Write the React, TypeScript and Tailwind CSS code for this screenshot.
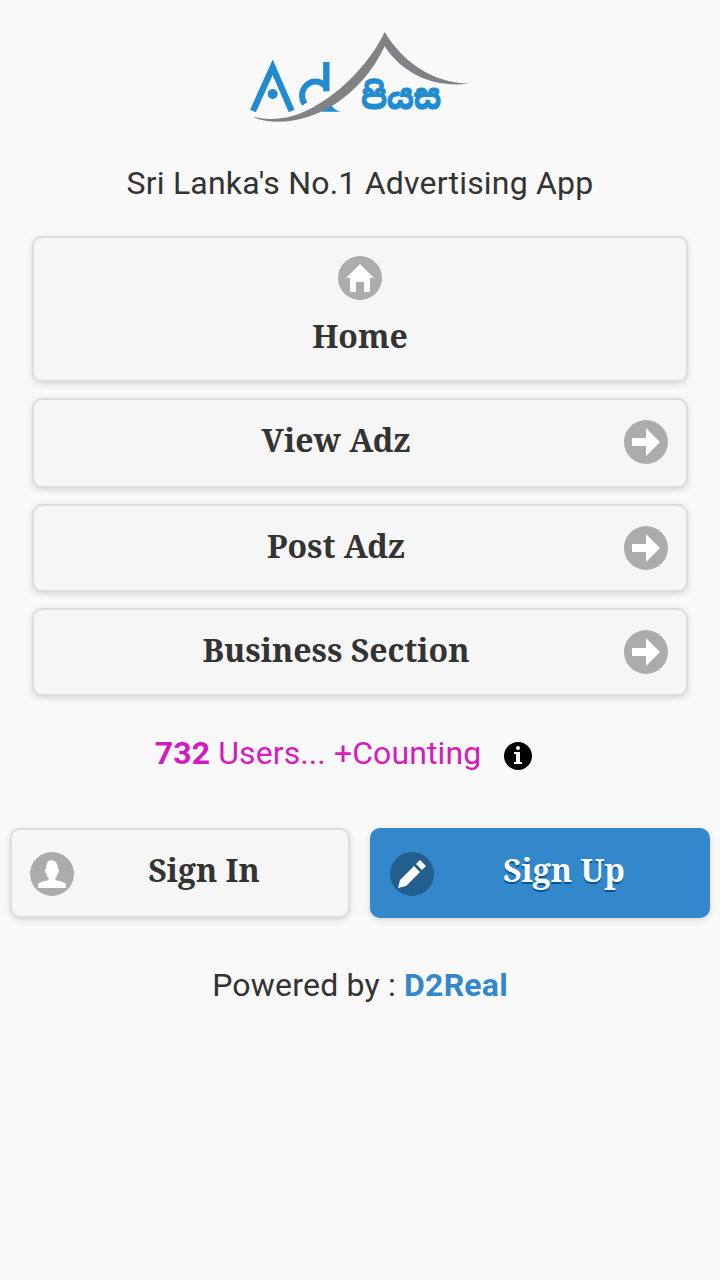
import type { ReactNode } from "react";

const serif = "font-['Noto_Serif','Droid_Serif','DejaVu_Serif_Condensed','DejaVu_Serif',serif] font-bold text-[32px] leading-[42px] tracking-normal";
const raised = "rounded-[10px] border-2 border-[#ddd] bg-[#f6f6f6] text-[#333] shadow-[0_2px_6px_rgba(0,0,0,0.15)]";

const icons = {
  home: <path d="M7 0 0 7h2v7h3V9h4v5h3V7h2z" />,
  arrow: <path d="M7 0v5H0v4h7v5l7-7z" />,
  user: (
    <path d="M8.851,10.101c-0.18-0.399-0.2-0.763-0.153-1.104C9.383,8.49,9.738,7.621,9.891,6.465C10.493,6.355,10.5,5.967,10.5,5.5c0-0.437-0.008-0.804-0.502-0.94C9.999,4.539,10,4.521,10,4.5c0-2.103-1-4-2-4C8,0.5,7.5,0,6.5,0C5,0,4,1.877,4,4.5c0,0.021,0.001,0.039,0.002,0.06C3.508,4.696,3.5,5.063,3.5,5.5c0,0.467,0.007,0.855,0.609,0.965C4.262,7.621,4.617,8.49,5.303,8.997c0.047,0.341,0.026,0.704-0.153,1.104C1.503,10.503,0,12,0,12v2h14v-2C14,12,12.497,10.503,8.851,10.101z" />
  ),
  edit: <path d="M1,10l-1,4l4-1l7-7L8,3L1,10z M11,0L9,2l3,3l2-2L11,0z" />,
};

function Icon({ name }: { name: keyof typeof icons }) {
  return (
    <span className="flex size-11 shrink-0 items-center justify-center rounded-full bg-black/30">
      <svg viewBox="0 0 14 14" className="size-7 fill-white">{icons[name]}</svg>
    </span>
  );
}

function RowButton({ children, height }: { children: ReactNode; height: string }) {
  return (
    <button className={`flex w-full items-start px-[18px] ${height} ${raised}`}>
      <span className={`flex-1 pt-[19px] pl-[26px] text-center ${serif}`}>{children}</span>
      <span className="mt-5 ml-[30px]"><Icon name="arrow" /></span>
    </button>
  );
}

function Logo() {
  return (
    <svg viewBox="30 36 660 270" className="h-[90px] w-[220px]" aria-label="Ad පියස">
      <g fill="none" stroke="#218bd0">
        <path d="M39 273 98 142 155 273" strokeWidth="19" strokeMiterlimit="10" />
        <path d="M259 126V214" strokeWidth="19" />
        <path d="M259 202A40 42 0 1 0 194 252" strokeWidth="18" />
      </g>
      <circle cx="98" cy="222" r="15" fill="#218bd0" />
      <path d="M244 275 274 256Q286 274 303 275Z" fill="#218bd0" />
      <path d="M36 290C140 315 222 269 299 207C353 160 402 104 434 36C485 120 570 188 688 191C567 206 480 150 434 79C400 150 354 205 290 249C208 304 105 321 36 290Z" fill="#818285" />
      <g transform="translate(0 272) scale(1 1.22)">
        <text x="364" y="-3" fontSize="84" fontWeight="700" textLength="239" lengthAdjust="spacingAndGlyphs" fill="#218bd0" stroke="#218bd0" strokeWidth="3" className="tracking-normal font-['Noto_Sans_Sinhala','Noto_Sans',sans-serif]">පියස</text>
      </g>
    </svg>
  );
}

export default function App() {
  return (
    <main className="flex min-h-screen w-full flex-col items-center bg-[#f9f9f9] pt-8 font-[Roboto,sans-serif] text-[32px] leading-[42px] tracking-[0.2px] text-[#333]">
      <Logo />
      <p className="mt-10">Sri Lanka's No.1 Advertising App</p>
      <nav className="mt-8 flex w-full flex-col gap-4 px-8">
        <button className={`flex h-[146px] flex-col items-center pt-[18px] ${raised}`}>
          <Icon name="home" />
          <span className={`mt-[15px] ${serif}`}>Home</span>
        </button>
        <RowButton height="h-[90px]">View Adz</RowButton>
        <RowButton height="h-[88px]">Post Adz</RowButton>
        <RowButton height="h-[88px]">Business Section</RowButton>
      </nav>
      <div className="mt-9 flex items-center gap-[23px] pr-[33px] text-[#d61abf]">
        <p className="tracking-[0.1px]"><b>732</b> Users... +Counting</p>
        <svg viewBox="0 0 14 14" className="mt-[6px] size-7 fill-black">
          <path d="M7,0C3.134,0,0,3.134,0,7s3.134,7,7,7s7-3.134,7-7S10.866,0,7,0z" />
          <path className="fill-white" d="M7 2a1 1 0 1 1 0 2 1 1 0 0 1 0-2zM9 11H5v-1h1V6H5V5h3v5h1z" />
        </svg>
      </div>
      <div className="mt-[54px] grid w-full grid-cols-2 gap-5 px-[10px]">
        <button className={`flex h-[90px] items-start pl-[18px] ${raised}`}>
          <span className="mt-[22px]"><Icon name="user" /></span>
          <span className={`flex-1 pt-[19px] pr-[14px] text-center ${serif}`}>Sign In</span>
        </button>
        <button className="flex h-[90px] items-start rounded-[10px] border-2 border-[#3388cc] bg-[#3388cc] pl-[18px] text-white shadow-[0_2px_6px_rgba(0,0,0,0.15)]">
          <span className="mt-[22px]"><Icon name="edit" /></span>
          <span className={`flex-1 pt-[19px] pr-[14px] text-center [text-shadow:0_2px_0_#005599] ${serif}`}>Sign Up</span>
        </button>
      </div>
      <p className="mt-[46px]">Powered by : <b className="text-[#3388cc]">D2Real</b></p>
    </main>
  );
}
